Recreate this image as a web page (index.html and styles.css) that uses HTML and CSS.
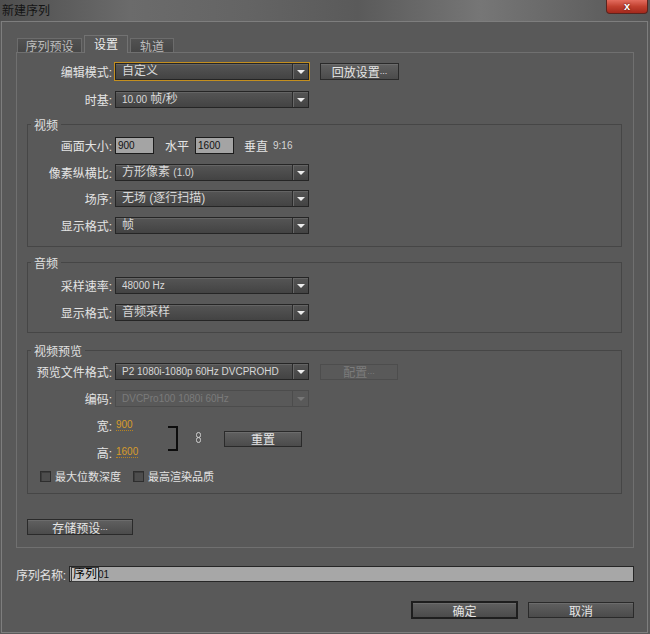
FILE: index.html
```html
<!DOCTYPE html>
<html lang="zh-CN">
<head>
<meta charset="utf-8">
<title>新建序列</title>
<link rel="stylesheet" href="styles.css">
</head>
<body>
<div class="titlebar">
  <span class="title">新建序列</span>
  <div class="close">x</div>
</div>
<div class="dialog">
  <div class="tabs">
    <div class="tab t1">序列预设</div>
    <div class="tab t2 active">设置</div>
    <div class="tab t3">轨道</div>
  </div>
  <div class="panel">
    <div class="row">
      <span class="lbl">编辑模式:</span>
      <div class="select focus"><span class="sel-text">自定义</span><span class="sel-arrow"></span></div>
      <div class="btn playback">回放设置<span class="dots">...</span></div>
    </div>
    <div class="row r2">
      <span class="lbl">时基:</span>
      <div class="select"><span class="sel-text"><span class="lt">10.00</span> 帧/秒</span><span class="sel-arrow"></span></div>
    </div>

    <fieldset class="group vid">
      <legend>视频</legend>
      <div class="row">
        <span class="lbl">画面大小:</span>
        <div class="num-input">900</div>
        <span class="unit u1">水平</span>
        <div class="num-input">1600</div>
        <span class="unit u2">垂直</span>
        <span class="ratio">9:16</span>
      </div>
      <div class="row m10">
        <span class="lbl">像素纵横比:</span>
        <div class="select"><span class="sel-text">方形像素 <span class="lt">(1.0)</span></span><span class="sel-arrow"></span></div>
      </div>
      <div class="row m9">
        <span class="lbl">场序:</span>
        <div class="select"><span class="sel-text">无场 (逐行扫描)</span><span class="sel-arrow"></span></div>
      </div>
      <div class="row m10">
        <span class="lbl">显示格式:</span>
        <div class="select"><span class="sel-text">帧</span><span class="sel-arrow"></span></div>
      </div>
    </fieldset>

    <fieldset class="group aud">
      <legend>音频</legend>
      <div class="row">
        <span class="lbl">采样速率:</span>
        <div class="select"><span class="sel-text"><span class="lt">48000 Hz</span></span><span class="sel-arrow"></span></div>
      </div>
      <div class="row m10">
        <span class="lbl">显示格式:</span>
        <div class="select"><span class="sel-text">音频采样</span><span class="sel-arrow"></span></div>
      </div>
    </fieldset>

    <fieldset class="group prev">
      <legend>视频预览</legend>
      <div class="row">
        <span class="lbl">预览文件格式:</span>
        <div class="select"><span class="sel-text"><span class="lt">P2 1080i-1080p 60Hz DVCPROHD</span></span><span class="sel-arrow"></span></div>
        <div class="btn disabled cfg">配置<span class="dots">...</span></div>
      </div>
      <div class="row m10">
        <span class="lbl">编码:</span>
        <div class="select disabled"><span class="sel-text"><span class="lt">DVCPro100 1080i 60Hz</span></span><span class="sel-arrow"></span></div>
      </div>
      <div class="wh">
        <div class="wh-rows">
          <div class="row wrow">
            <span class="lbl">宽:</span>
            <span class="hot">900</span>
          </div>
          <div class="row wrow m9">
            <span class="lbl">高:</span>
            <span class="hot">1600</span>
          </div>
        </div>
        <svg class="bracket" width="11" height="25" viewBox="0 0 11 25"><path d="M0 1 H9 V24 H0" fill="none" stroke="#0d0d0d" stroke-width="2"/></svg>
        <svg class="chain" width="7" height="11" viewBox="0 0 7 11"><rect x="1.5" y="0.5" width="4" height="5" rx="2" fill="none" stroke="#d0d0d0"/><rect x="1.5" y="5.5" width="4" height="5" rx="2" fill="none" stroke="#d0d0d0"/></svg>
        <div class="btn reset">重置</div>
      </div>
      <div class="checks">
        <span class="cb"></span><span class="cb-text">最大位数深度</span>
        <span class="cb cb2"></span><span class="cb-text">最高渲染品质</span>
      </div>
    </fieldset>

    <div class="btn save">存储预设<span class="dots">...</span></div>
  </div>

  <div class="name-row">
    <span class="name-lbl">序列名称:</span>
    <div class="name-input"><span class="sel">序列</span><span class="lt"> 01</span></div>
  </div>

  <div class="actions">
    <div class="btn ok">确定</div>
    <div class="btn cancel">取消</div>
  </div>
</div>
</body>
</html>
```

FILE: styles.css
```css
* { box-sizing: border-box; }
html, body { margin: 0; padding: 0; }
body {
  width: 650px;
  height: 634px;
  overflow: hidden;
  background: #5a5a5a;
  font-family: "Liberation Sans", "Noto Sans CJK SC", sans-serif;
  font-size: 12px;
  color: #e2e2e2;
}
.lt { font-family: "Liberation Sans", sans-serif; font-size: 10px; }
.dots { font-family: "Liberation Sans", sans-serif; font-size: 9px; }

/* title bar */
.titlebar {
  height: 21px;
  display: flex;
  justify-content: space-between;
  align-items: flex-start;
  background: linear-gradient(90deg, #4e4e4e 0%, #6b6b6b 20%, #646464 38%, #5a5a5a 55%, #767676 74%, #656565 88%, #565656 100%);
}
.title {
  color: #141414;
  padding: 3px 0 0 2px;
  line-height: 14px;
  font-family: "Noto Sans CJK SC", sans-serif;
}
.close {
  width: 42px;
  height: 14px;
  margin-right: 2px;
  background: linear-gradient(#e36c5e, #c1402f 50%, #a3291c);
  border: 1px solid #5a241e;
  border-top: none;
  border-radius: 0 0 4px 4px;
  color: #fff;
  font: bold 11px/12px "Liberation Sans", sans-serif;
  text-align: center;
  text-shadow: 0 0 2px #3a0a05;
}

/* dialog */
.dialog {
  margin-left: 1px;
  width: 647px;
  height: 612px;
  border: 1px solid #7e7e7e;
  background: #595959;
  padding: 13px 13px 0 14px;
  display: flex;
  flex-direction: column;
}
.tabs {
  display: flex;
  align-items: flex-end;
  height: 17px;
  padding-left: 1px;
  gap: 2px;
}
.tab {
  height: 14px;
  border: 1px solid #6c6c6c;
  border-bottom: none;
  background: linear-gradient(#525252, #464646);
  color: #bdbdbd;
  text-align: center;
  line-height: 13px;
  font-family: "Noto Sans CJK SC", sans-serif;
}
.t1 { width: 65px; }
.t2 { width: 44px; }
.t3 { width: 44px; }
.tab.active {
  height: 18px;
  margin-bottom: -1px;
  background: #595959;
  color: #ededed;
  border-color: #727272;
  line-height: 16px;
  position: relative;
  z-index: 1;
}
.panel {
  width: 618px;
  height: 496px;
  border: 1px solid #707070;
  padding-top: 10px;
  display: flex;
  flex-direction: column;
  align-items: flex-start;
}

/* rows */
.row {
  display: flex;
  align-items: center;
  height: 17px;
}
.lbl {
  width: 98px;
  padding-right: 3px;
  text-align: right;
  color: #e4e4e4;
  white-space: nowrap;
}
.group .lbl { width: 87px; }
.r2 { margin-top: 11px; }
.m10 { margin-top: 10px; }
.m9 { margin-top: 9px; }

/* select */
.select {
  width: 194px;
  height: 17px;
  display: flex;
  border: 1px solid #252525;
  background: linear-gradient(#555555, #434343);
  box-shadow: inset 0 1px 0 #646464;
}
.select.focus { outline: 1px solid #c48f1f; }
.sel-text {
  flex: 1;
  padding-left: 6px;
  line-height: 15px;
  color: #d8d8d8;
  white-space: nowrap;
  overflow: hidden;
}
.sel-arrow {
  width: 16px;
  border-left: 1px solid #2c2c2c;
  box-shadow: inset 1px 0 0 #686868;
  display: flex;
  align-items: center;
  justify-content: center;
}
.sel-arrow::after {
  content: "";
  border-left: 4px solid transparent;
  border-right: 4px solid transparent;
  border-top: 4px solid #ececec;
  margin-left: 1px;
}
.select.disabled {
  background: #595959;
  border-color: #4c4c4c;
  box-shadow: none;
}
.select.disabled .sel-text { color: #7b7b7b; }
.select.disabled .sel-arrow { border-left-color: #4c4c4c; box-shadow: none; }
.select.disabled .sel-arrow::after { border-top-color: #777; }

/* buttons */
.btn {
  height: 17px;
  display: flex;
  align-items: center;
  justify-content: center;
  border: 1px solid #2a2a2a;
  background: linear-gradient(#606060, #4b4b4b);
  box-shadow: inset 0 1px 0 #6c6c6c;
  color: #e6e6e6;
  font-family: "Noto Sans CJK SC", sans-serif;
  line-height: 15px;
  white-space: nowrap;
}
.playback { width: 79px; margin-left: 11px; }
.btn.disabled {
  background: #595959;
  border-color: #4d4d4d;
  box-shadow: none;
  color: #7c7c7c;
}
.cfg { width: 78px; margin-left: 11px; height: 16px; }
.reset { width: 78px; height: 16px; margin-left: 22px; }
.save { width: 106px; height: 16px; margin: 25px 0 0 10px; }

/* inputs */
.num-input {
  width: 39px;
  height: 17px;
  border: 1px solid #1b1b1b;
  background: #a4a4a4;
  color: #111;
  font-family: "Liberation Sans", sans-serif;
  font-size: 10px;
  line-height: 15px;
  padding-left: 2px;
}
.unit { color: #e4e4e4; }
.u1 { margin: 0 6px 0 11px; }
.u2 { margin: 0 5px 0 10px; }
.ratio { color: #d6d6d6; font-size: 10px; font-family: "Liberation Sans", sans-serif; }

/* fieldsets */
.group {
  margin: 0 11px 0 10px;
  width: 595px;
  border: 1px solid #464646;
  padding: 5px 0 12px 0;
  min-width: 0;
}
.group legend {
  padding: 0 3px;
  margin-left: 3px;
  line-height: 15px;
  color: #e0e0e0;
  font-family: "Noto Sans CJK SC", sans-serif;
}
.vid { margin-top: 9px; }
.aud { margin-top: 8px; padding: 7px 0 11px 0; }
.prev { margin-top: 10px; padding: 5px 0 8px 0; }

/* width/height block */
.wh {
  display: flex;
  align-items: center;
  margin-top: 9px;
}
.wh-rows { width: 140px; }
.wrow { height: 18px; }
.hot {
  color: #d89c2b;
  font-family: "Liberation Sans", sans-serif;
  font-size: 10px;
  line-height: 11px;
  border-bottom: 1px dotted #b8841f;
  margin-left: 1px;
}
.bracket { display: block; }
.chain { display: block; margin: -3px 0 0 16px; }

/* checkboxes */
.checks {
  display: flex;
  align-items: center;
  height: 18px;
  margin-top: 6px;
  padding-left: 12px;
}
.cb {
  width: 11px;
  height: 11px;
  border: 1px solid #2e2e2e;
  background: #4d4d4d;
  box-shadow: inset 1px 1px 0 #3c3c3c;
}
.cb2 { margin-left: 12px; }
.cb-text { margin-left: 4px; font-size: 11px; color: #e2e2e2; }

/* sequence name */
.name-row {
  display: flex;
  align-items: center;
  height: 16px;
  margin-top: 18px;
}
.name-lbl { width: 53px; color: #e2e2e2; white-space: nowrap; letter-spacing: -0.3px; }
.name-input {
  width: 565px;
  height: 16px;
  border: 1px solid #262626;
  background: #a7a7a7;
  color: #111;
  display: flex;
  align-items: center;
  padding-left: 2px;
}
.name-input .sel {
  background: #c4c4c4;
  outline: 1px solid #3a3a3a;
  color: #050505;
  line-height: 13px;
  padding: 0 1px;
}

/* actions */
.actions {
  display: flex;
  justify-content: flex-end;
  align-items: center;
  gap: 10px;
  margin-top: 19px;
  height: 18px;
}
.ok { width: 107px; height: 18px; border: 2px solid #1e1e1e; }
.cancel { width: 106px; height: 16px; }
```
